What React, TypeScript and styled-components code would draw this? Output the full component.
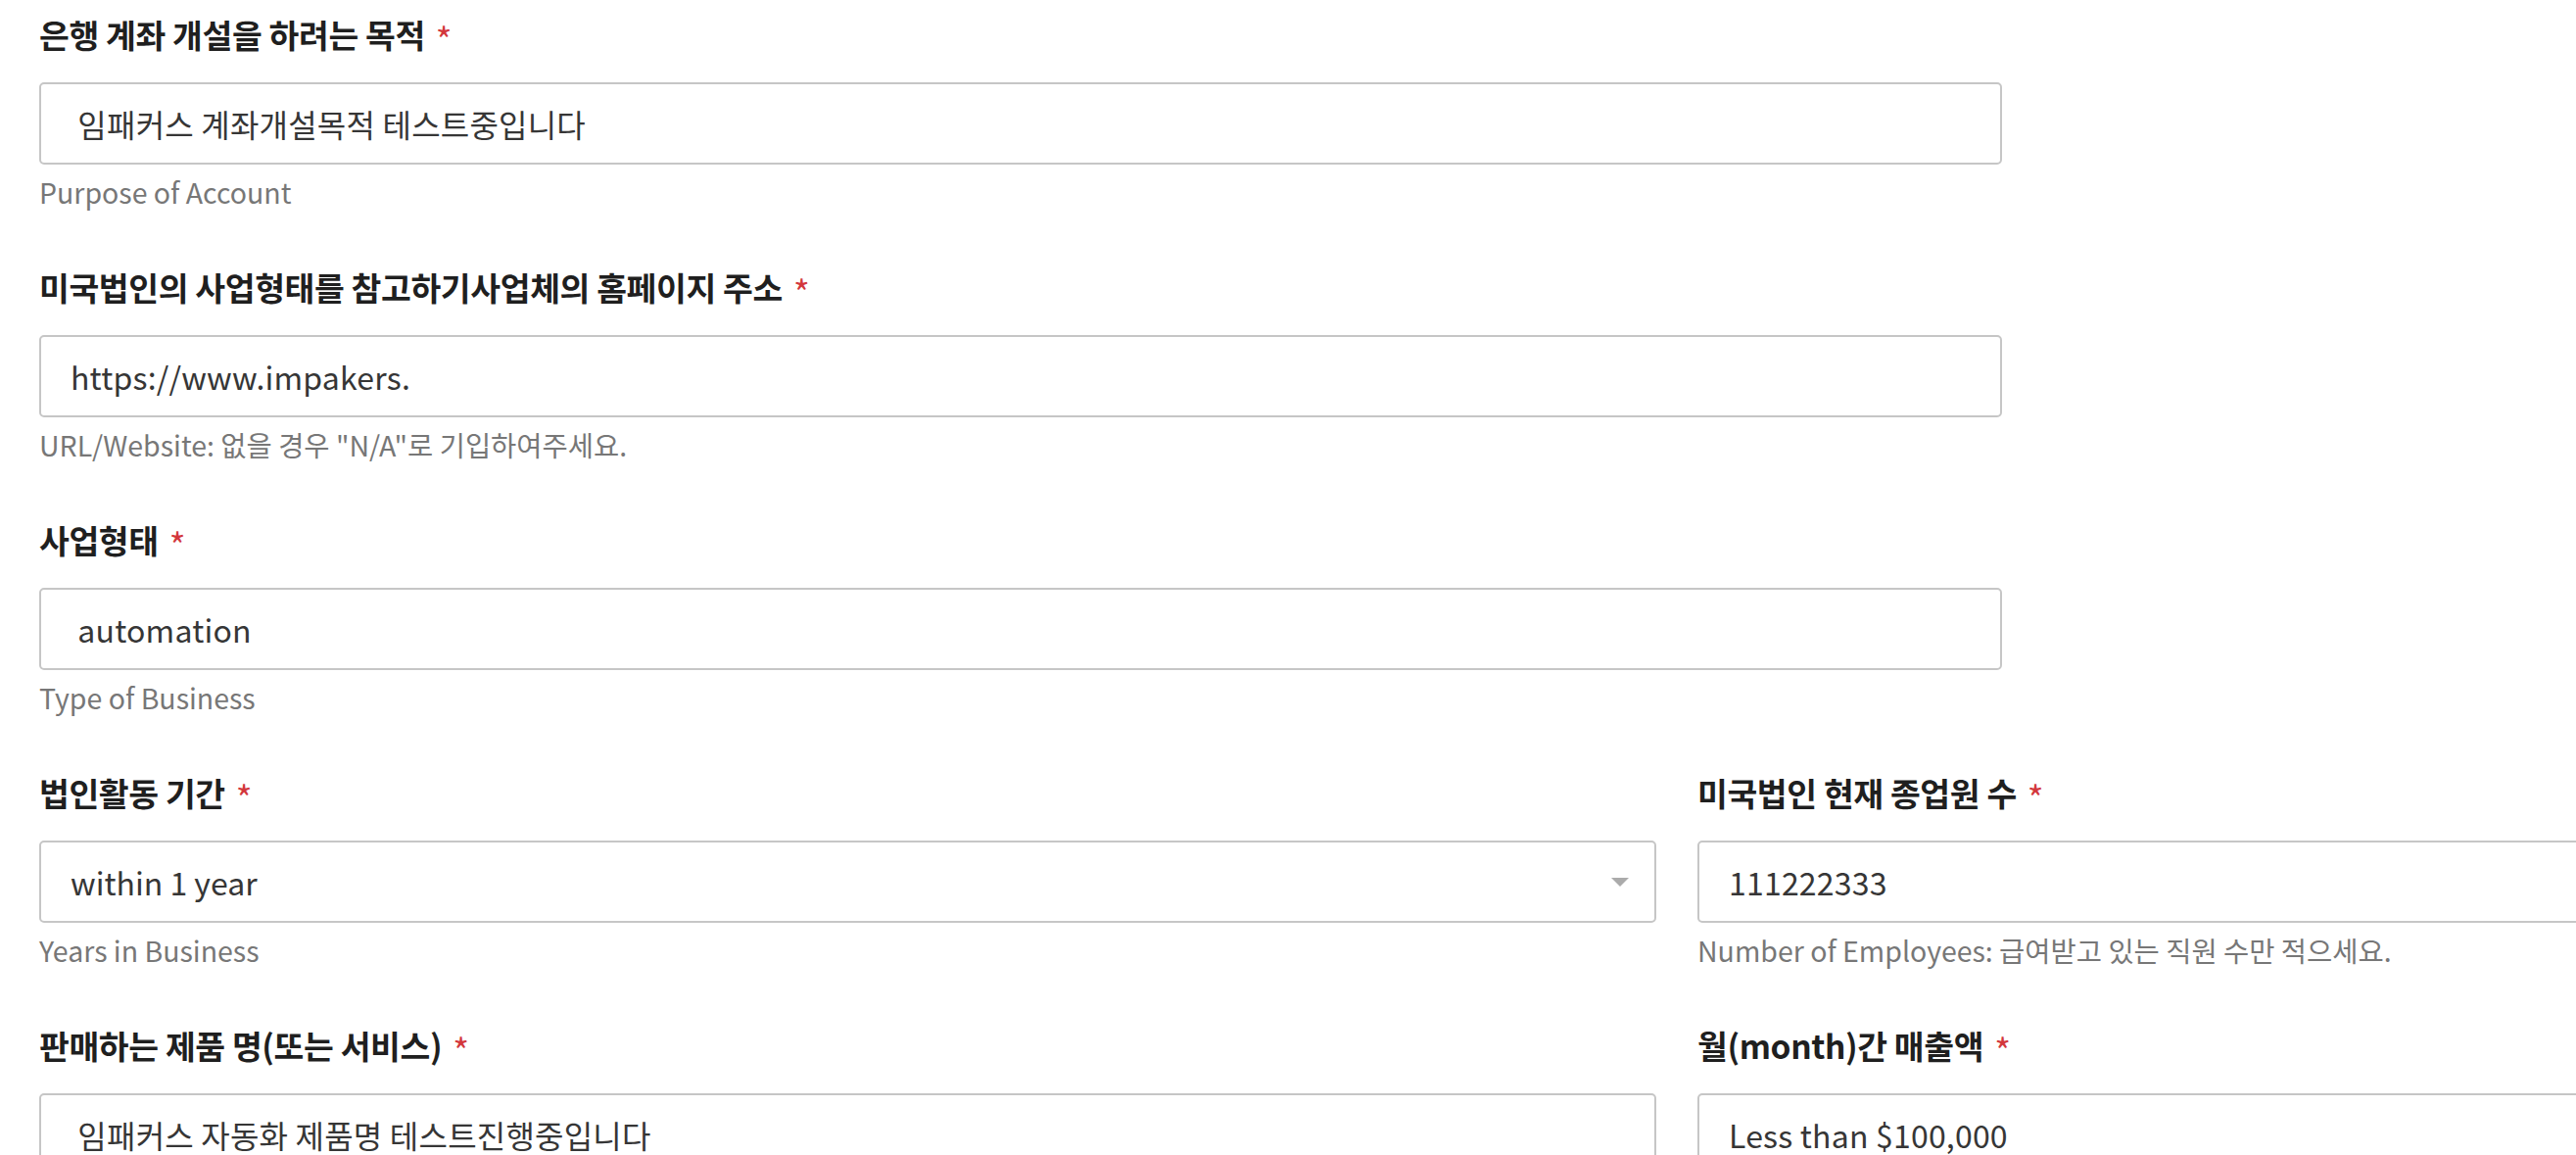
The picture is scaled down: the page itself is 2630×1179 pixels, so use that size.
import React from 'react'
import styled, { createGlobalStyle } from 'styled-components'

const GlobalStyle = createGlobalStyle`
  html, body {
    margin: 0;
    padding: 0;
    background: #ffffff;
    overflow: hidden;
  }
  body {
    font-family: 'Noto Sans CJK KR', 'Noto Sans', sans-serif;
    color: #222;
  }
`

interface FieldProps {
  label: string
  help: string
  children: React.ReactNode
}

function Field({ label, help, children }: FieldProps) {
  return (
    <FieldBlock>
      <Label>
        {label}
        <Required>*</Required>
      </Label>
      {children}
      <Help>{help}</Help>
    </FieldBlock>
  )
}

export default function App() {
  return (
    <>
      <GlobalStyle />
      <Form>
        <Wide>
          <Field label='은행 계좌 개설을 하려는 목적' help='Purpose of Account'>
            <TextInput readOnly value=' 임패커스 계좌개설목적 테스트중입니다' />
          </Field>
          <Field
            label='미국법인의 사업형태를 참고하기사업체의 홈페이지 주소'
            help='URL/Website: 없을 경우 "N/A"로 기입하여주세요.'
          >
            <TextInput readOnly value='https://www.impakers.' />
          </Field>
          <Field label='사업형태' help='Type of Business'>
            <TextInput readOnly value=' automation' />
          </Field>
        </Wide>
        <Row>
          <Field label='법인활동 기간' help='Years in Business'>
            <SelectBox>
              <span>within 1 year</span>
              <Caret />
            </SelectBox>
          </Field>
          <Field
            label='미국법인 현재 종업원 수'
            help='Number of Employees: 급여받고 있는 직원 수만 적으세요.'
          >
            <TextInput readOnly value='111222333' />
          </Field>
        </Row>
        <Row>
          <Field label='판매하는 제품 명(또는 서비스)' help=''>
            <TextInput readOnly value=' 임패커스 자동화 제품명 테스트진행중입니다' />
          </Field>
          <Field label='월(month)간 매출액' help=''>
            <TextInput readOnly value='Less than $100,000' />
          </Field>
        </Row>
      </Form>
    </>
  )
}

const Form = styled.div`
  padding: 17px 0 0 40px;
  display: flex;
  flex-direction: column;
`

const Wide = styled.div`
  width: 2004px;
  display: flex;
  flex-direction: column;
`

const Row = styled.div`
  display: grid;
  grid-template-columns: 1651px 1651px;
  column-gap: 42px;
`

const FieldBlock = styled.div`
  display: flex;
  flex-direction: column;
  padding-bottom: 63px;
`

const Label = styled.label`
  display: flex;
  align-items: center;
  height: 34px;
  margin-bottom: 33px;
  font-size: 33.5px;
  font-weight: 700;
  color: #1f1f1f;
  letter-spacing: -0.4px;
`

const Required = styled.span`
  margin-left: 11px;
  margin-top: 10px;
  font-size: 36px;
  line-height: 1;
  font-weight: 400;
  color: #d3373c;
`

const TextInput = styled.input`
  box-sizing: border-box;
  width: 100%;
  height: 84px;
  padding: 0 30px;
  border: 2px solid #c6c6c6;
  border-radius: 5px;
  background: #fff;
  font-family: 'Noto Sans CJK KR', 'Noto Sans', sans-serif;
  font-size: 32px;
  letter-spacing: 0.2px;
  color: #363636;
  outline: none;
`

const SelectBox = styled.div`
  box-sizing: border-box;
  display: flex;
  align-items: center;
  justify-content: space-between;
  height: 84px;
  padding: 0 26px 0 30px;
  border: 2px solid #c6c6c6;
  border-radius: 5px;
  font-size: 32px;
  color: #363636;
`

const Caret = styled.span`
  width: 0;
  height: 0;
  border-left: 9px solid transparent;
  border-right: 9px solid transparent;
  border-top: 9px solid #ababab;
`

const Help = styled.div`
  margin-top: 12px;
  height: 32px;
  line-height: 32px;
  font-size: 28.5px;
  color: #777;
`
